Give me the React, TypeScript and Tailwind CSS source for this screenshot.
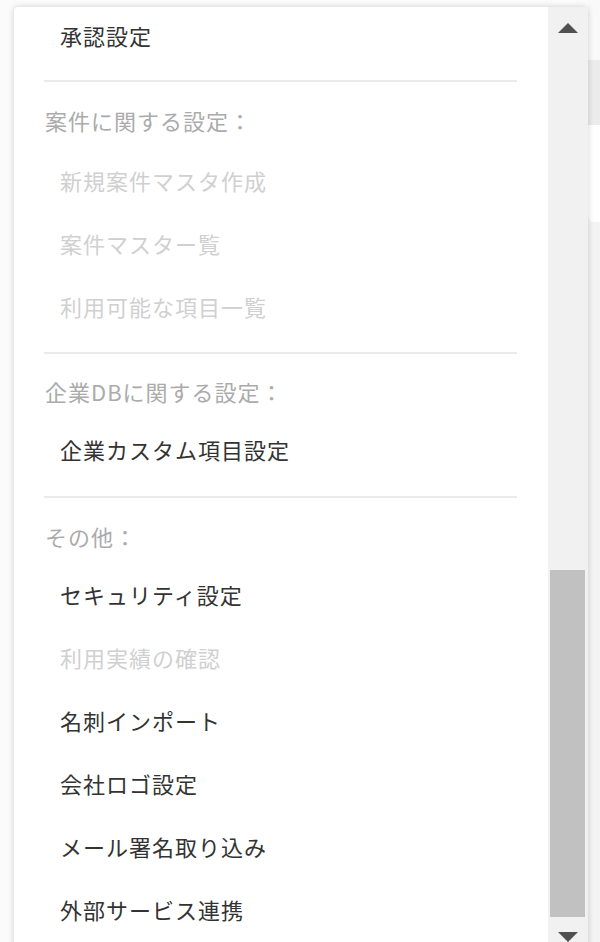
import React from 'react'

type Row =
  | { kind: 'item'; label: string; disabled?: boolean; h?: string }
  | { kind: 'header'; label: string; h: string; pt: string }
  | { kind: 'divider'; pt: string }

const rows: Row[] = [
  { kind: 'item', label: '承認設定', h: 'h-[60px]' },
  { kind: 'divider', pt: 'pt-[13px]' },
  { kind: 'header', label: '案件に関する設定：', h: 'h-[69px]', pt: 'pt-[27px]' },
  { kind: 'item', label: '新規案件マスタ作成', disabled: true },
  { kind: 'item', label: '案件マスター覧', disabled: true },
  { kind: 'item', label: '利用可能な項目一覧', disabled: true },
  { kind: 'divider', pt: 'pt-[12px]' },
  { kind: 'header', label: '企業DBに関する設定：', h: 'h-[66px]', pt: 'pt-[26px]' },
  { kind: 'item', label: '企業カスタム項目設定' },
  { kind: 'divider', pt: 'pt-[13px]' },
  { kind: 'header', label: 'その他：', h: 'h-[67px]', pt: 'pt-[27px]' },
  { kind: 'item', label: 'セキュリティ設定' },
  { kind: 'item', label: '利用実績の確認', disabled: true },
  { kind: 'item', label: '名刺インポート' },
  { kind: 'item', label: '会社ロゴ設定' },
  { kind: 'item', label: 'メール署名取り込み' },
  { kind: 'item', label: '外部サービス連携' },
]

function MenuRow({ row }: { row: Row }) {
  if (row.kind === 'divider') {
    return (
      <div className={`${row.pt} pl-[30px] pr-[31px]`}>
        <div className="h-[2px] bg-[#ebebeb]" />
      </div>
    )
  }
  if (row.kind === 'header') {
    return (
      <div className={`${row.h} ${row.pt} pl-[31px] text-[#ababab] leading-[22px]`}>
        {row.label}
      </div>
    )
  }
  return (
    <div
      className={`${row.h ?? 'h-[63px]'} flex items-center pl-[46px] pb-[4px] ${
        row.disabled ? 'text-[#d0d0d0]' : 'text-[#333333]'
      }`}
    >
      {row.label}
    </div>
  )
}

function Scrollbar() {
  return (
    <div className="w-[40px] bg-[#f1f1f1] flex flex-col shrink-0">
      <div className="h-[40px] flex justify-center pt-[16px]">
        <svg width="20" height="10" viewBox="0 0 20 10">
          <polygon points="10,0 20,10 0,10" fill="#505050" />
        </svg>
      </div>
      <div className="h-[523px]" />
      <div className="h-[347px] ml-[2px] mr-[3px] bg-[#c1c1c1]" />
      <div className="flex justify-center pt-[15px] pb-[6px]">
        <svg width="20" height="10" viewBox="0 0 20 10">
          <polygon points="0,0 20,0 10,10" fill="#505050" />
        </svg>
      </div>
    </div>
  )
}

export default function App() {
  return (
    <div
      className="w-[600px] h-[942px] overflow-hidden bg-[#fbfbfb] flex"
      style={{ fontFamily: '"Noto Sans CJK JP", "Noto Sans", sans-serif' }}
    >
      <div className="w-[14px] shrink-0" />
      <div className="relative z-10 mt-[7px] w-[574px] h-[960px] shrink-0 bg-white rounded-[4px] shadow-[0_0_6px_rgba(0,0,0,0.18)] flex overflow-hidden">
        <div className="flex-1 text-[22px] tracking-[1px]">
          {rows.map((row, i) => (
            <MenuRow key={i} row={row} />
          ))}
        </div>
        <Scrollbar />
      </div>
      <div className="flex-1 flex flex-col">
        <div className="h-[60px] bg-[#f9f9f9]" />
        <div className="h-[65px] bg-[#ececec]" />
        <div className="h-[97px] bg-white rounded-bl-[6px] shadow-[0_1px_3px_rgba(0,0,0,0.08)]" />
        <div className="flex-1 bg-[#f3f3f3]" />
      </div>
    </div>
  )
}
